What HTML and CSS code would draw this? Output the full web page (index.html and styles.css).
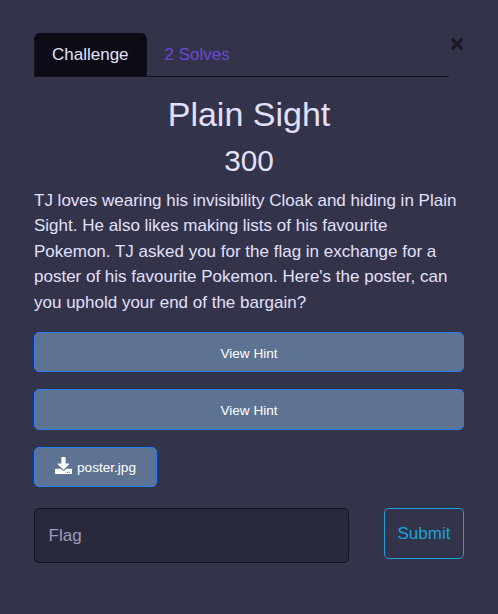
FILE: index.html
```html
<!DOCTYPE html>
<html lang="en">
<head>
<meta charset="utf-8">
<title>Plain Sight</title>
<link rel="stylesheet" href="styles.css">
</head>
<body>
<main class="challenge">
  <header class="top">
    <nav class="tabs">
      <a class="tab tab-active">Challenge</a>
      <a class="tab">2 Solves</a>
    </nav>
    <button class="close" aria-label="Close"><svg viewBox="0 0 12 12" width="12" height="12"><path d="M2 2L10 10M10 2L2 10"/></svg></button>
  </header>
  <h2 class="name">Plain Sight</h2>
  <h3 class="value">300</h3>
  <p class="description">TJ loves wearing his invisibility Cloak and hiding in Plain Sight. He also likes making lists of his favourite Pokemon. TJ asked you for the flag in exchange for a poster of his favourite Pokemon. Here's the poster, can you uphold your end of the bargain?</p>
  <div class="hints">
    <button class="btn">View Hint</button>
    <button class="btn btn-second">View Hint</button>
  </div>
  <button class="btn file">
    <svg class="icon" viewBox="0 0 512 512"><path d="M216 0h80c13.300 0 24 10.700 24 24v168h87.700c17.800 0 26.700 21.500 14.100 34.100L269.700 378.300c-7.500 7.500-19.800 7.500-27.300 0L90.100 226.100c-12.600-12.600-3.700-34.100 14.100-34.100H192V24c0-13.300 10.700-24 24-24zm296 376v112c0 13.300-10.700 24-24 24H24c-13.300 0-24-10.700-24-24V376c0-13.300 10.700-24 24-24h146.700l49 49c20.100 20.100 52.500 20.100 72.600 0l49-49H488c13.300 0 24 10.700 24 24zm-124 88c0-11-9-20-20-20s-20 9-20 20 9 20 20 20 20-9 20-20zm64 0c0-11-9-20-20-20s-20 9-20 20 9 20 20 20 20-9 20-20z"/></svg>
    <span>poster.jpg</span>
  </button>
  <form class="answer">
    <input class="flag" type="text" placeholder="Flag">
    <button class="submit" type="button">Submit</button>
  </form>
</main>
</body>
</html>
```
FILE: styles.css
```css
* {
  box-sizing: border-box;
}

body {
  margin: 0;
  min-height: 614px;
  background: #33334a;
  color: #e2e0ff;
  font: 17px/25.5px "Liberation Sans", Arial, sans-serif;
}

.challenge {
  padding: 33px 34px 0;
}

.top {
  display: flex;
  height: 44px;
}

.tabs {
  display: flex;
  width: 415px;
  border-bottom: 1px solid #121220;
}

.tab {
  padding: 9px 17px 8px;
  height: 43px;
  border: solid transparent;
  border-width: 0 1px;
  color: #6c48d6;
}

.tab-active {
  background: #0c0c16;
  border-color: #121220;
  border-radius: 6px 6px 0 0;
  color: #e2e0ff;
}

.close {
  margin: 5px 0 0 2px;
  padding: 0;
  width: 12px;
  height: 12px;
  border: 0;
  background: none;
}

.close svg {
  display: block;
  stroke: #1b1b28;
  stroke-width: 3.4;
  stroke-linecap: round;
}

.name,
.value {
  margin: 0;
  font-weight: 400;
  text-align: center;
}

.name {
  margin-top: 17px;
  font-size: 34px;
  line-height: 41px;
}

.value {
  margin-top: 8px;
  font-size: 29.75px;
  line-height: 36px;
}

.description {
  margin: 8.5px 0 16.5px;
}

.hints {
  display: grid;
  gap: 17px;
}

.btn {
  height: 40px;
  padding: 4px 20px 0;
  border: 1px solid #267dff;
  border-radius: 5px;
  background: #5d7391;
  color: #fff;
  font: 13.6px/20px "Liberation Sans", Arial, sans-serif;
}

.btn-second {
  height: 41px;
  padding-top: 3px;
}

.file {
  display: flex;
  align-items: center;
  justify-content: center;
  gap: 5px;
  width: 123px;
  margin-top: 17px;
  padding-top: 2px;
}

.icon {
  width: 17px;
  height: 17px;
  margin-top: -4px;
  fill: #fff;
}

.answer {
  display: flex;
  justify-content: space-between;
  align-items: flex-start;
  margin-top: 21px;
}

.flag {
  width: 315px;
  height: 55px;
  padding: 2px 13.6px 0;
  border: 1px solid #121220;
  border-radius: 5px;
  background: #29293e;
  color: #e2e0ff;
  font: inherit;
}

.flag::placeholder {
  color: #9d9bbb;
}

.submit {
  width: 80px;
  height: 51px;
  padding: 2px 0 0;
  border: 1px solid #17a2dc;
  border-radius: 5px;
  background: none;
  color: #17a2dc;
  font: inherit;
}
```
